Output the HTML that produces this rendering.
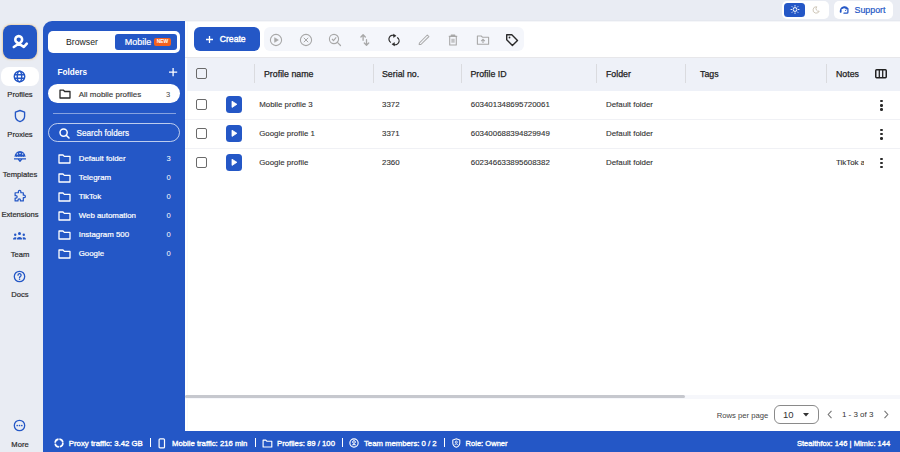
<!DOCTYPE html>
<html><head><meta charset="utf-8">
<style>
*{box-sizing:border-box;margin:0;padding:0}
html,body{width:900px;height:452px;overflow:hidden;background:#E9ECF3;font-family:"Liberation Sans",sans-serif;color:#2a2a2a}
.a{position:absolute}
.t{position:absolute;white-space:nowrap;line-height:1}
svg{position:absolute;overflow:visible}
.navlbl{position:absolute;left:0;width:40px;text-align:center;font-size:7.6px;color:#2b2b2b;line-height:1;white-space:nowrap;-webkit-text-stroke:0.2px #2b2b2b}
.fl{color:#fff;font-size:7.9px;-webkit-text-stroke:0.2px #fff}
.fc{color:#fff;font-size:7.6px}
.sep{position:absolute;top:64px;width:1px;height:19px;background:#DADBDF}
.hd{font-size:8.8px;color:#222;top:69.5px;-webkit-text-stroke:0.25px #222}
.rowline{position:absolute;left:185px;width:715px;height:1.3px;background:#F0F1F5}
.cell{font-size:7.9px;color:#333;-webkit-text-stroke:0.12px #333}
.cb{position:absolute;left:196px;width:11px;height:11px;border:1.4px solid #6a6a6a;border-radius:2px;background:#fff}
.play{position:absolute;left:225.8px;width:16.4px;height:16.8px;border-radius:3.5px;background:#2457C6}
.kebab{position:absolute;left:880.2px;width:2.4px;height:11px}
.kebab i{position:absolute;left:0;width:2.4px;height:2.4px;border-radius:50%;background:#2a2a2a}
.st{position:absolute;white-space:nowrap;line-height:1;top:439.5px;font-size:7.75px;color:#fff;-webkit-text-stroke:0.35px #fff}
</style></head><body>
<div class="a" style="left:2.5px;top:24.5px;width:34.7px;height:34.5px;border-radius:8px;background:#2457C6;box-shadow:0 0 1.5px 0.6px rgba(235,205,160,.75)"></div>
<svg style="left:0;top:0" width="42" height="62" viewBox="0 0 42 62"><g fill="none" stroke="#fff" stroke-width="2.6" stroke-linecap="round" stroke-linejoin="round"><path d="M13.8 47 L20.8 42.2 A3.4 3.4 0 1 0 16.6 42.2 L23.8 47 L26.8 43.6"/></g></svg>
<div class="a" style="left:1px;top:66.6px;width:37.5px;height:19px;border-radius:8px;background:#fff"></div>
<svg style="left:13px;top:69.6px" width="13" height="13" viewBox="0 0 13 13"><g fill="none" stroke="#2457C6" stroke-width="1.45"><circle cx="6.5" cy="6.5" r="5.25"/><ellipse cx="6.5" cy="6.5" rx="2.2" ry="5.25"/><path d="M1.3 4.7h10.4M1.3 8.3h10.4"/></g></svg>
<svg style="left:13px;top:109px" width="13" height="14" viewBox="0 0 13 14"><path d="M7 1.5 L11.6 3.2 V7.2 C11.6 9.9 9.6 11.7 7 12.6 C4.4 11.7 2.4 9.9 2.4 7.2 V3.2 Z" fill="none" stroke="#2457C6" stroke-width="1.35" stroke-linejoin="round"/></svg>
<svg style="left:12px;top:149px" width="16" height="14" viewBox="0 0 16 14"><path d="M2.5 8 A5.5 6 0 0 1 13.5 8 Q12.4 7.2 11.3 8 Q10.2 7.2 9.1 8 Q8 7.2 6.9 8 Q5.8 7.2 4.7 8 Q3.6 7.2 2.5 8Z" fill="#2457C6"/><g fill="#E9ECF3"><circle cx="5.4" cy="4.9" r="0.75"/><circle cx="8" cy="4.6" r="0.75"/><circle cx="10.6" cy="4.9" r="0.75"/></g><path d="M2 9.9 H14 M6 9.9 L8 12.3 L10 9.9" fill="none" stroke="#2457C6" stroke-width="1.2" stroke-linejoin="round"/></svg>
<svg style="left:12px;top:189px" width="15" height="15" viewBox="0 0 15 15"><path transform="translate(8.2 7.2) scale(0.82) translate(-8.2 -7.2)" d="M6 1.5 a1.5 1.5 0 0 1 3 0 V3 h3 v3 h1 a1.5 1.5 0 0 1 0 3 h-1 v4 h-3.5 v-1 a1.5 1.5 0 0 0 -3 0 v1 H2 V9.5 h1 a1.5 1.5 0 0 0 0 -3 H2 V3 h4 Z" fill="none" stroke="#2457C6" stroke-width="1.5" stroke-linejoin="round"/></svg>
<svg style="left:13px;top:232px" width="13" height="8" viewBox="0 0 13 8"><g fill="#2457C6"><circle cx="6.5" cy="1.6" r="1.5"/><circle cx="2.2" cy="2.8" r="1.2"/><circle cx="10.8" cy="2.8" r="1.2"/><path d="M3.8 7.5 a2.7 2.6 0 0 1 5.4 0 Z"/><path d="M0 7.5 a2.2 2.2 0 0 1 3.4-1.9 L3 7.5Z"/><path d="M13 7.5 a2.2 2.2 0 0 0 -3.4-1.9 L10 7.5Z"/></g></svg>
<svg style="left:13.4px;top:270.2px" width="13" height="13" viewBox="0 0 13 13"><g fill="none" stroke="#2457C6" stroke-width="1.3"><circle cx="6.5" cy="6.5" r="5.2"/><path d="M5 5.2 a1.55 1.55 0 1 1 2.2 1.4 c-.5.25-.65.5-.65 1.1" stroke-linecap="round"/></g><circle cx="6.55" cy="9.3" r=".75" fill="#2457C6"/></svg>
<svg style="left:13.4px;top:418.6px" width="13" height="13" viewBox="0 0 13 13"><g fill="none" stroke="#2457C6" stroke-width="1.3"><circle cx="6.5" cy="6.5" r="5.2"/></g><g fill="#2457C6"><circle cx="4.2" cy="6.5" r=".85"/><circle cx="6.5" cy="6.5" r=".85"/><circle cx="8.8" cy="6.5" r=".85"/></g></svg>
<div class="navlbl" style="top:90.6px">Profiles</div>
<div class="navlbl" style="top:130.8px">Proxies</div>
<div class="navlbl" style="top:170.8px">Templates</div>
<div class="navlbl" style="top:210.8px">Extensions</div>
<div class="navlbl" style="top:250.8px">Team</div>
<div class="navlbl" style="top:290.8px">Docs</div>
<div class="navlbl" style="top:440.8px">More</div>
<div class="a" style="left:43px;top:21px;width:142px;height:431px;background:#2457C6;border-top-left-radius:9px"></div>
<div class="a" style="left:43px;top:431px;width:857px;height:21px;background:#2457C6"></div>
<div class="a" style="left:185px;top:21px;width:715px;height:410px;background:#fff"></div>
<div class="a" style="left:187px;top:21px;width:1px;height:410px;background:#FAFAFB"></div>
<div class="a" style="left:185px;top:20px;width:715px;height:1px;background:#E5E8EF"></div>
<div class="a" style="left:185px;top:21px;width:715px;height:1px;background:#F5F6F9"></div>
<div class="a" style="left:48px;top:31px;width:132px;height:22px;border-radius:5px;background:#fff"></div>
<div class="t" style="left:66px;top:37.5px;font-size:8.7px;color:#222">Browser</div>
<div class="a" style="left:115px;top:34px;width:62px;height:15.5px;border-radius:3px;background:#2457C6"></div>
<div class="t" style="left:124.7px;top:37.5px;font-size:9px;color:#fff;-webkit-text-stroke:0.2px #fff">Mobile</div>
<div class="a" style="left:154px;top:38px;width:17px;height:7.5px;border-radius:2px;background:#F4601E;color:#fff;font-size:5px;font-weight:bold;text-align:center;line-height:7.5px">NEW</div>
<div class="t" style="left:57.5px;top:68.5px;font-size:8.2px;font-weight:bold;color:#fff">Folders</div>
<svg style="left:169.2px;top:67.5px" width="8.2" height="8.2" viewBox="0 0 8.2 8.2"><path d="M4.1 0V8.2M0 4.1H8.2" stroke="#fff" stroke-width="1.3"/></svg>
<div class="a" style="left:48px;top:84px;width:132px;height:19px;border-radius:9.5px;background:#fff"></div>
<svg style="left:59px;top:89px" width="12" height="10" viewBox="0 0 12 10"><path d="M1 1.2 H4.5 L5.7 2.5 H11 V9 H1 Z" fill="none" stroke="#2a2a2a" stroke-width="1.3" stroke-linejoin="round"/></svg>
<div class="t" style="left:78.8px;top:90.5px;font-size:7.96px;color:#3a3a3a;-webkit-text-stroke:0.15px #3a3a3a">All mobile profiles</div>
<div class="t" style="left:166px;top:90.5px;font-size:7.6px;color:#444">3</div>
<div class="a" style="left:53px;top:113px;width:123px;height:1px;background:rgba(255,255,255,.45)"></div>
<div class="a" style="left:48px;top:123px;width:132px;height:19.3px;border-radius:10px;border:1px solid rgba(255,255,255,.7)"></div>
<svg style="left:59px;top:128px" width="11" height="11" viewBox="0 0 11 11"><circle cx="4.6" cy="4.6" r="3.6" fill="none" stroke="#fff" stroke-width="1.5"/><path d="M7.2 7.2 L10 10" stroke="#fff" stroke-width="1.6" stroke-linecap="round"/></svg>
<div class="t" style="left:76.6px;top:129.8px;font-size:8.14px;color:#fff;-webkit-text-stroke:0.2px #fff">Search folders</div>
<svg style="left:58.3px;top:154.1px" width="13" height="10" viewBox="0 0 13 10"><path d="M1 1 H5 L6.3 2.4 H12 V9 H1 Z" fill="none" stroke="#fff" stroke-width="1.3" stroke-linejoin="round"/></svg>
<div class="t fl" style="left:78.7px;top:154.6px">Default folder</div>
<div class="t fc" style="left:166.5px;top:154.6px">3</div>
<svg style="left:58.3px;top:173.1px" width="13" height="10" viewBox="0 0 13 10"><path d="M1 1 H5 L6.3 2.4 H12 V9 H1 Z" fill="none" stroke="#fff" stroke-width="1.3" stroke-linejoin="round"/></svg>
<div class="t fl" style="left:78.7px;top:173.6px">Telegram</div>
<div class="t fc" style="left:166.5px;top:173.6px">0</div>
<svg style="left:58.3px;top:192.1px" width="13" height="10" viewBox="0 0 13 10"><path d="M1 1 H5 L6.3 2.4 H12 V9 H1 Z" fill="none" stroke="#fff" stroke-width="1.3" stroke-linejoin="round"/></svg>
<div class="t fl" style="left:78.7px;top:192.6px">TikTok</div>
<div class="t fc" style="left:166.5px;top:192.6px">0</div>
<svg style="left:58.3px;top:211.1px" width="13" height="10" viewBox="0 0 13 10"><path d="M1 1 H5 L6.3 2.4 H12 V9 H1 Z" fill="none" stroke="#fff" stroke-width="1.3" stroke-linejoin="round"/></svg>
<div class="t fl" style="left:78.7px;top:211.6px">Web automation</div>
<div class="t fc" style="left:166.5px;top:211.6px">0</div>
<svg style="left:58.3px;top:230.1px" width="13" height="10" viewBox="0 0 13 10"><path d="M1 1 H5 L6.3 2.4 H12 V9 H1 Z" fill="none" stroke="#fff" stroke-width="1.3" stroke-linejoin="round"/></svg>
<div class="t fl" style="left:78.7px;top:230.6px">Instagram 500</div>
<div class="t fc" style="left:166.5px;top:230.6px">0</div>
<svg style="left:58.3px;top:249.1px" width="13" height="10" viewBox="0 0 13 10"><path d="M1 1 H5 L6.3 2.4 H12 V9 H1 Z" fill="none" stroke="#fff" stroke-width="1.3" stroke-linejoin="round"/></svg>
<div class="t fl" style="left:78.7px;top:249.6px">Google</div>
<div class="t fc" style="left:166.5px;top:249.6px">0</div>
<div class="a" style="left:194px;top:27.2px;width:66px;height:23.5px;border-radius:6px;background:#2457C6"></div>
<svg style="left:205.8px;top:35.7px" width="7" height="7" viewBox="0 0 7 7"><path d="M3.5 0V7M0 3.5H7" stroke="#fff" stroke-width="1.3"/></svg>
<div class="t" style="left:219.7px;top:34.8px;font-size:8.66px;color:#fff;-webkit-text-stroke:0.4px #fff">Create</div>
<div class="a" style="left:264px;top:27.2px;width:260px;height:23.5px;border-radius:6px;background:#F4F6FB"></div>
<svg style="left:268px;top:31.5px" width="16" height="16" viewBox="-8 -8 16 16"><circle cx="0" cy="0" r="5.6" fill="none" stroke="#A8A8A8" stroke-width="1.1"/><path d="M-1.4 -2.3 L2.4 0 L-1.4 2.3Z" fill="#A8A8A8" stroke="#A8A8A8" stroke-width="0.6" stroke-linejoin="round"/></svg>
<svg style="left:297.5px;top:31.5px" width="16" height="16" viewBox="-8 -8 16 16"><circle cx="0" cy="0" r="5.6" fill="none" stroke="#A8A8A8" stroke-width="1.1"/><path d="M-2.2 -2.2 L2.2 2.2 M2.2 -2.2 L-2.2 2.2" stroke="#A8A8A8" stroke-width="1"/></svg>
<svg style="left:327px;top:31.5px" width="16" height="16" viewBox="-8 -8 16 16"><circle cx="-1" cy="-1" r="4.6" fill="none" stroke="#A8A8A8" stroke-width="1.1"/><path d="M2.4 2.4 L5.5 5.5" stroke="#A8A8A8" stroke-width="1.2" stroke-linecap="round"/><path d="M-3 -1 L-1.5 0.6 L1.2 -2.6" fill="none" stroke="#A8A8A8" stroke-width="1.1"/></svg>
<svg style="left:356.5px;top:31.5px" width="16" height="16" viewBox="-8 -8 16 16"><path d="M-1.9 0.3 V-5.2 M-4.1 -3 L-1.9 -5.3 L0.3 -3 M1.5 -0.3 V5.2 M-0.7 3 L1.5 5.3 L3.7 3" fill="none" stroke="#A8A8A8" stroke-width="1.3" stroke-linecap="round" stroke-linejoin="round"/></svg>
<svg style="left:386px;top:31.5px" width="16" height="16" viewBox="-8 -8 16 16"><g transform="scale(0.82)"><path d="M-3.8 3 A4.6 4.6 0 0 1 0.8 -5.2 M3.8 -3 A4.6 4.6 0 0 1 -0.8 5.2" fill="none" stroke="#2a2a2a" stroke-width="1.45"/><path d="M-0.8 -7.2 L2.6 -5.1 L-0.6 -3.1Z M0.8 7.2 L-2.6 5.1 L0.6 3.1Z" fill="#2a2a2a" stroke="#2a2a2a" stroke-width="0.5" stroke-linejoin="round"/></g></svg>
<svg style="left:415.5px;top:31.5px" width="16" height="16" viewBox="-8 -8 16 16"><path d="M-4.8 4.6 L-4.6 3 L3.3 -5 L4.9 -3.4 L-3.1 4.5 Z" fill="none" stroke="#A8A8A8" stroke-width="1.05" stroke-linejoin="round"/></svg>
<svg style="left:445px;top:31.5px" width="16" height="16" viewBox="-8 -8 16 16"><path d="M-4.2 -3.6 H4.2 M-1.8 -3.6 V-4.9 H1.8 V-3.6 M-3.3 -3.6 V5 H3.3 V-3.6 M-0.9 -1.2 V2.8 M0.9 -1.2 V2.8" fill="none" stroke="#A8A8A8" stroke-width="1.1" stroke-linejoin="round"/></svg>
<svg style="left:474.5px;top:31.5px" width="16" height="16" viewBox="-8 -8 16 16"><path d="M-5.6 -4 H-1.8 L-0.6 -2.8 H5.6 V4.2 H-5.6 Z" fill="none" stroke="#A8A8A8" stroke-width="1.1" stroke-linejoin="round"/><path d="M0 3 V-0.6 M-1.8 1.2 L0 -0.8 L1.8 1.2" fill="none" stroke="#A8A8A8" stroke-width="1.1"/></svg>
<svg style="left:504px;top:31.5px" width="16" height="16" viewBox="-8 -8 16 16"><path d="M-5.3 -5.3 H-0.2 L5.5 0.4 L0.4 5.5 L-5.3 -0.2 Z" fill="none" stroke="#2a2a2a" stroke-width="1.4" stroke-linejoin="round"/><circle cx="-2.5" cy="-2.5" r="0.9" fill="#2a2a2a"/></svg>
<div class="a" style="left:185px;top:57px;width:715px;height:1px;background:#E7E7EA"></div>
<div class="a" style="left:187px;top:58px;width:713px;height:32.5px;background:#EEF1F8"></div>
<div class="cb" style="top:68px;background:transparent"></div>
<div class="sep" style="left:253.8px"></div>
<div class="sep" style="left:372.5px"></div>
<div class="sep" style="left:460.5px"></div>
<div class="sep" style="left:596.3px"></div>
<div class="sep" style="left:684.5px"></div>
<div class="sep" style="left:826.3px"></div>
<div class="t hd" style="left:264px">Profile name</div>
<div class="t hd" style="left:382px">Serial no.</div>
<div class="t hd" style="left:470.4px">Profile ID</div>
<div class="t hd" style="left:606px">Folder</div>
<div class="t hd" style="left:700px">Tags</div>
<div class="t hd" style="left:836px">Notes</div>
<svg style="left:875px;top:68.8px" width="12" height="10" viewBox="0 0 12 10"><rect x="0.75" y="0.75" width="10.5" height="8" rx="0.9" fill="none" stroke="#222" stroke-width="1.5"/><path d="M4.3 1V8.5M7.7 1V8.5" stroke="#222" stroke-width="1.3"/></svg>
<div class="rowline" style="top:119.2px"></div>
<div class="cb" style="top:99.3px"></div>
<div class="play" style="top:96.20px"></div>
<svg style="left:225.8px;top:96.20px" width="16.5" height="16.8" viewBox="0 0 16.5 16.8"><path d="M6 5.2 L10.9 8.3 L6 11.4Z" fill="#fff" stroke="#fff" stroke-width="0.8" stroke-linejoin="round"/></svg>
<div class="t cell" style="left:259.2px;top:101.1px">Mobile profile 3</div>
<div class="t cell" style="left:382px;top:101.1px">3372</div>
<div class="t cell" style="left:470.8px;top:101.1px">603401348695720061</div>
<div class="t cell" style="left:606px;top:101.1px">Default folder</div>
<div class="kebab" style="top:100.1px"><i style="top:0"></i><i style="top:4.2px"></i><i style="top:8.4px"></i></div>
<div class="rowline" style="top:148.0px"></div>
<div class="cb" style="top:128.1px"></div>
<div class="play" style="top:125.00px"></div>
<svg style="left:225.8px;top:125.00px" width="16.5" height="16.8" viewBox="0 0 16.5 16.8"><path d="M6 5.2 L10.9 8.3 L6 11.4Z" fill="#fff" stroke="#fff" stroke-width="0.8" stroke-linejoin="round"/></svg>
<div class="t cell" style="left:259.2px;top:129.9px">Google profile 1</div>
<div class="t cell" style="left:382px;top:129.9px">3371</div>
<div class="t cell" style="left:470.8px;top:129.9px">603400688394829949</div>
<div class="t cell" style="left:606px;top:129.9px">Default folder</div>
<div class="kebab" style="top:128.9px"><i style="top:0"></i><i style="top:4.2px"></i><i style="top:8.4px"></i></div>
<div class="cb" style="top:156.9px"></div>
<div class="play" style="top:153.80px"></div>
<svg style="left:225.8px;top:153.80px" width="16.5" height="16.8" viewBox="0 0 16.5 16.8"><path d="M6 5.2 L10.9 8.3 L6 11.4Z" fill="#fff" stroke="#fff" stroke-width="0.8" stroke-linejoin="round"/></svg>
<div class="t cell" style="left:259.2px;top:158.7px">Google profile</div>
<div class="t cell" style="left:382px;top:158.7px">2360</div>
<div class="t cell" style="left:470.8px;top:158.7px">602346633895608382</div>
<div class="t cell" style="left:606px;top:158.7px">Default folder</div>
<div class="t cell" style="left:836px;top:158.7px;width:28.3px;overflow:hidden">TikTok a</div>
<div class="kebab" style="top:157.7px"><i style="top:0"></i><i style="top:4.2px"></i><i style="top:8.4px"></i></div>
<div class="a" style="left:185px;top:395.2px;width:715px;height:3.4px;background:#F6F7FB"></div>
<div class="a" style="left:185px;top:395px;width:500px;height:3px;background:#C6C8CE;border-radius:1.5px"></div>
<div class="t" style="left:716.7px;top:412px;font-size:7.7px;color:#444">Rows per page</div>
<div class="a" style="left:774px;top:405px;width:44.6px;height:19px;border:1px solid #8a8a8a;border-radius:6px;background:#fff"></div>
<div class="t" style="left:783px;top:410px;font-size:9.5px;color:#333">10</div>
<svg style="left:803px;top:412.5px" width="6" height="4" viewBox="0 0 6 4"><path d="M0 0 H6 L3 3.5Z" fill="#333"/></svg>
<svg style="left:827px;top:410px" width="6" height="9" viewBox="0 0 6 9"><path d="M4.5 0.8 L1.2 4.5 L4.5 8.2" fill="none" stroke="#777" stroke-width="1.1"/></svg>
<div class="t" style="left:841.9px;top:411px;font-size:8px;color:#333">1 - 3 of 3</div>
<svg style="left:883px;top:410px" width="6" height="9" viewBox="0 0 6 9"><path d="M1.5 0.8 L4.8 4.5 L1.5 8.2" fill="none" stroke="#777" stroke-width="1.1"/></svg>
<svg style="left:53.6px;top:437.8px" width="10" height="10" viewBox="0 0 10 10"><circle cx="5" cy="5" r="3.9" fill="none" stroke="#fff" stroke-width="1.6" stroke-dasharray="5.2 0.9"/></svg>
<div class="st" style="left:68.8px;font-size:7.8px">Proxy traffic: 3.42 GB</div>
<div class="st" style="left:172px;font-size:7.73px">Mobile traffic: 216 min</div>
<div class="st" style="left:277px;font-size:7.73px">Profiles: 89 / 100</div>
<div class="st" style="left:364px;font-size:7.74px">Team members: 0 / 2</div>
<div class="st" style="left:465.6px;font-size:7.56px">Role: Owner</div>
<div class="a" style="left:149.6px;top:438px;width:1.1px;height:9.2px;background:#fff"></div>
<div class="a" style="left:254.6px;top:438px;width:1.1px;height:9.2px;background:#fff"></div>
<div class="a" style="left:341.9px;top:438px;width:1.1px;height:9.2px;background:#fff"></div>
<div class="a" style="left:443.9px;top:438px;width:1.1px;height:9.2px;background:#fff"></div>
<svg style="left:158px;top:437.5px" width="8" height="11" viewBox="0 0 8 11"><rect x="1.1" y="0.8" width="5.4" height="9.1" rx="1" fill="none" stroke="#fff" stroke-width="1.2"/></svg>
<svg style="left:261.5px;top:438.5px" width="11" height="9" viewBox="0 0 11 9"><path d="M1.1 1.1 H3.8 L4.8 2.2 H9.8 V8 H1.1Z" fill="none" stroke="#fff" stroke-width="1.15" stroke-linejoin="round"/></svg>
<svg style="left:348.9px;top:437.9px" width="10" height="10" viewBox="0 0 10 10"><circle cx="5" cy="5" r="4.15" fill="none" stroke="#fff" stroke-width="1.15"/><circle cx="5" cy="4" r="1.35" fill="none" stroke="#fff" stroke-width="1"/><path d="M2.6 7.7 a2.6 1.9 0 0 1 4.8 0" fill="none" stroke="#fff" stroke-width="1"/></svg>
<svg style="left:451.5px;top:437.8px" width="9" height="10" viewBox="0 0 9 10"><path d="M4.3 0.8 L7.8 2.1 V4.9 C7.8 7.1 6.2 8.5 4.3 9.3 C2.4 8.5 0.8 7.1 0.8 4.9 V2.1Z" fill="none" stroke="#fff" stroke-width="1.05"/><circle cx="4.3" cy="4.1" r="1.05" fill="none" stroke="#fff" stroke-width="0.85"/><path d="M2.8 6.9 a1.55 1.3 0 0 1 3 0" fill="none" stroke="#fff" stroke-width="0.85"/></svg>
<div class="st" style="left:796.9px;font-size:7.58px">Stealthfox: 146 | Mimic: 144</div>
<div class="a" style="left:782px;top:1px;width:47px;height:18px;border-radius:5px;background:#fff"></div>
<div class="a" style="left:784px;top:2.9px;width:21.4px;height:13.8px;border-radius:3.5px;background:#2457C6"></div>
<svg style="left:789.2px;top:4.1px" width="12" height="11" viewBox="-6 -5.5 12 11"><circle cx="0" cy="0" r="1.9" fill="none" stroke="#fff" stroke-width="1"/><g stroke="#fff" stroke-width="0.9" stroke-linecap="round"><path d="M0 -4V-3.3M0 3.3V4M-4 0H-3.3M3.3 0H4M-2.9 -2.9L-2.4 -2.4M2.4 2.4L2.9 2.9M-2.9 2.9L-2.4 2.4M2.4 -2.4L2.9 -2.9"/></g></svg>
<svg style="left:812px;top:6px" width="8" height="8" viewBox="0 0 8 8"><path d="M4.8 0.8 A3.2 3.2 0 1 0 7.2 5.2 A2.6 2.6 0 0 1 4.8 0.8Z" fill="none" stroke="#C8BFB0" stroke-width="0.9"/></svg>
<div class="a" style="left:834px;top:1px;width:58.5px;height:18px;border-radius:5px;background:#fff"></div>
<svg style="left:839px;top:3.6px" width="10" height="10" viewBox="0 0 10 10"><g fill="none" stroke="#2457C6" stroke-width="1.3" stroke-linecap="round"><path d="M1.6 7.2 A4 4 0 0 1 8.8 4.6"/><path d="M8.9 5.2 V8.2 Q8.9 9.2 7.9 9.2 H5"/><path d="M3.2 4.2 Q5.5 2.6 7.6 4.8"/></g><rect x="0.8" y="6" width="1.7" height="2.8" rx="0.85" fill="#2457C6"/><circle cx="6.6" cy="6.3" r="0.6" fill="#2457C6"/></svg>
<div class="t" style="left:854.5px;top:5.5px;font-size:8.85px;color:#2457C6;-webkit-text-stroke:0.2px #2457C6">Support</div>
</body></html>
